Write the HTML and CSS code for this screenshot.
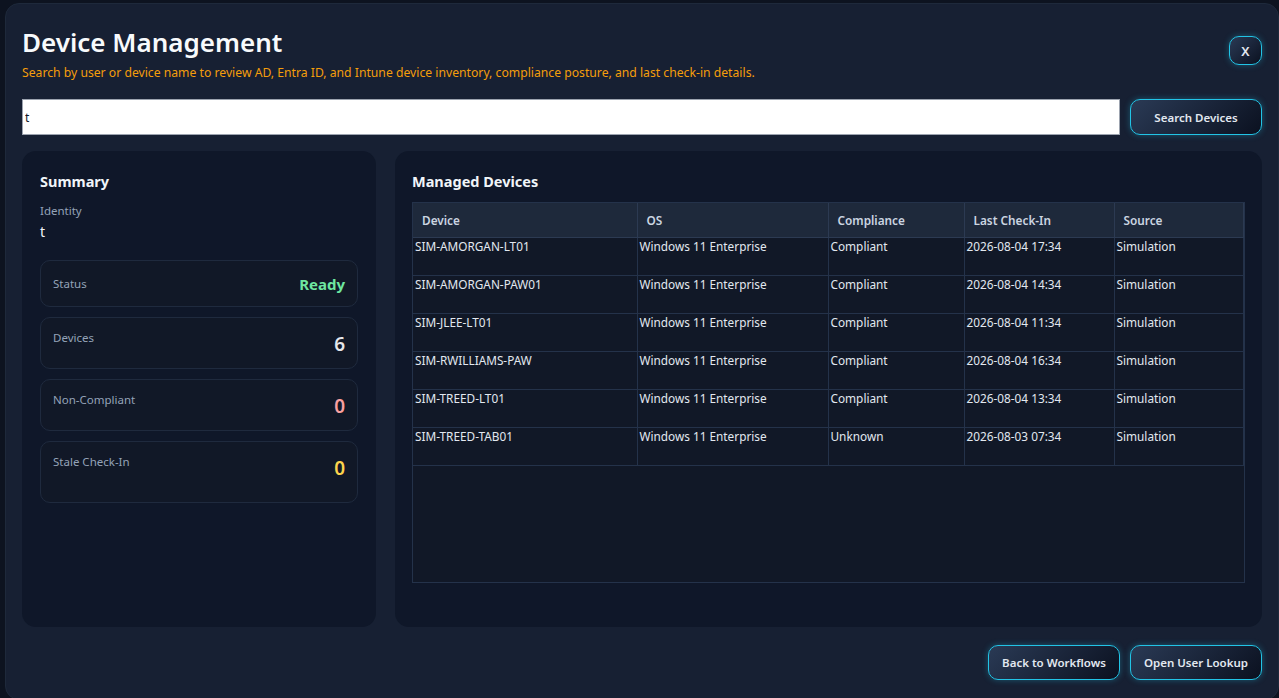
FILE: index.html
```html
<!DOCTYPE html>
<html>
<head>
<link rel="stylesheet" href="styles.css">
</head>
<body>
    <div class="window">
        <div class="header">
            <div class="header-text">
                <h1 class="title">Device Management</h1>
                <p class="subtitle">Search by user or device name to review AD, Entra ID, and Intune device inventory, compliance posture, and last check-in details.</p>
            </div>
            <button class="btn btn-close">X</button>
        </div>
        <div class="search-row">
            <input class="search-input" type="text" value="t">
            <button class="btn btn-search">Search Devices</button>
        </div>
        <div class="content">
            <div class="panel summary">
                <h2 class="panel-title">Summary</h2>
                <div class="identity-label">Identity</div>
                <div class="identity-value">t</div>
                <div class="stat stat-status">
                    <span class="stat-label">Status</span>
                    <span class="stat-value ready">Ready</span>
                </div>
                <div class="stat stat-top">
                    <span class="stat-label">Devices</span>
                    <span class="stat-value big">6</span>
                </div>
                <div class="stat stat-top">
                    <span class="stat-label">Non-Compliant</span>
                    <span class="stat-value big bad">0</span>
                </div>
                <div class="stat stat-top stat-tall">
                    <span class="stat-label">Stale Check-In</span>
                    <span class="stat-value big warn">0</span>
                </div>
            </div>
            <div class="panel devices">
                <h2 class="panel-title">Managed Devices</h2>
                <div class="table-wrap">
                    <table class="device-table">
                        <thead>
                            <tr>
                                <th class="c-device">Device</th>
                                <th class="c-os">OS</th>
                                <th class="c-comp">Compliance</th>
                                <th class="c-check">Last Check-In</th>
                                <th class="c-src">Source</th>
                            </tr>
                        </thead>
                        <tbody id="rows"></tbody>
                    </table>
                </div>
            </div>
        </div>
        <div class="footer">
            <button class="btn btn-footer">Back to Workflows</button>
            <button class="btn btn-footer">Open User Lookup</button>
        </div>
    </div>
    <script>
        const devices = [
            ['SIM-AMORGAN-LT01', 'Windows 11 Enterprise', 'Compliant', '2026-08-04 17:34', 'Simulation'],
            ['SIM-AMORGAN-PAW01', 'Windows 11 Enterprise', 'Compliant', '2026-08-04 14:34', 'Simulation'],
            ['SIM-JLEE-LT01', 'Windows 11 Enterprise', 'Compliant', '2026-08-04 11:34', 'Simulation'],
            ['SIM-RWILLIAMS-PAW', 'Windows 11 Enterprise', 'Compliant', '2026-08-04 16:34', 'Simulation'],
            ['SIM-TREED-LT01', 'Windows 11 Enterprise', 'Compliant', '2026-08-04 13:34', 'Simulation'],
            ['SIM-TREED-TAB01', 'Windows 11 Enterprise', 'Unknown', '2026-08-03 07:34', 'Simulation'],
        ];

        const tbody = document.getElementById('rows');
        for (const d of devices) {
            const tr = document.createElement('tr');
            for (const v of d) {
                const td = document.createElement('td');
                td.textContent = v;
                tr.appendChild(td);
            }
            tbody.appendChild(tr);
        }
    </script>
</body>
</html>
```

FILE: styles.css
```css
* {
    box-sizing: border-box;
}
body {
    margin: 0;
    padding: 3px 0 0 5px;
    height: 698px;
    overflow: hidden;
    background: #0d1320;
    font-family: "Noto Sans", "Open Sans", sans-serif;
    color: #e5e7eb;
}
.window {
    height: 697px;
    background: #172033;
    border: 1px solid #1e293b;
    border-radius: 14px;
    padding: 21px 16px 0 16px;
    display: flex;
    flex-direction: column;
}
.header {
    display: flex;
    justify-content: space-between;
    align-items: flex-start;
}
.title {
    margin: 0;
    font-size: 26px;
    font-weight: 600;
    color: #f8fafc;
    line-height: 34px;
}
.subtitle {
    margin: 5px 0 0;
    font-size: 12.2px;
    color: #f59e0b;
    line-height: 17px;
}
.btn {
    font-family: inherit;
    font-weight: 600;
    color: #e2e8f0;
    background: linear-gradient(135deg, #2a3a55 0%, #0b1120 100%);
    border: 1px solid #22c4e6;
    border-radius: 10px;
    box-shadow: 0 0 6px rgba(34, 196, 230, 0.35);
    cursor: pointer;
}
.btn-close {
    margin-top: 11px;
    width: 33px;
    height: 29px;
    font-size: 13px;
}
.search-row {
    display: flex;
    gap: 10px;
    margin-top: 18px;
}
.search-input {
    flex: 1;
    height: 36px;
    border: 1px solid #9ca3af;
    background: #ffffff;
    font-family: inherit;
    font-size: 12px;
    color: #111827;
    padding: 0 2px;
}
.btn-search {
    width: 132px;
    height: 36px;
    font-size: 11.5px;
}
.content {
    display: flex;
    gap: 19px;
    margin-top: 16px;
    height: 476px;
}
.panel {
    background: #0f1729;
    border-radius: 14px;
    padding: 20px 18px;
}
.summary {
    width: 354px;
}
.devices {
    flex: 1;
    padding: 20px 17px;
}
.panel-title {
    margin: 0;
    font-size: 14.5px;
    font-weight: 700;
    color: #f1f5f9;
    line-height: 20px;
}
.identity-label {
    margin-top: 12px;
    font-size: 11.5px;
    color: #94a3b8;
    line-height: 15px;
}
.identity-value {
    margin-top: 4px;
    font-size: 14px;
    color: #f1f5f9;
    line-height: 19px;
}
.stat {
    display: flex;
    justify-content: space-between;
    align-items: center;
    background: #111827;
    border: 1px solid #1f2a3e;
    border-radius: 10px;
    padding: 0 12px;
    margin-top: 10px;
    height: 52px;
}
.stat-status {
    margin-top: 19px;
    height: 47px;
}
.stat-top {
    align-items: flex-start;
    padding-top: 12px;
}
.stat-tall {
    height: 62px;
}
.stat-label {
    font-size: 11.5px;
    color: #94a3b8;
    line-height: 16px;
}
.stat-value {
    font-weight: 700;
    font-size: 15px;
}
.stat-value.big {
    font-size: 19px;
    line-height: 24px;
    margin-top: 2px;
    font-weight: 600;
}
.ready {
    color: #6ee7a0;
}
.bad {
    color: #f9a0a0;
}
.warn {
    color: #fcd34d;
}
.table-wrap {
    margin-top: 11px;
    height: 381px;
    border: 1px solid #24324a;
    background: #111827;
}
.device-table {
    border-collapse: collapse;
    width: 100%;
    font-size: 11.8px;
}
.device-table th {
    background: #1e293b;
    color: #cbd5e1;
    font-weight: 600;
    text-align: left;
    height: 34px;
    padding: 0 9px;
    border-right: 1px solid #2c3a52;
    border-bottom: 1px solid #2c3a52;
}
.device-table td {
    height: 38px;
    padding: 0 2px;
    vertical-align: top;
    color: #e2e8f0;
    border-right: 1px solid #24324a;
    border-bottom: 1px solid #24324a;
    line-height: 16px;
}
.c-device { width: 224px; }
.c-os { width: 191px; }
.c-comp { width: 136px; }
.c-check { width: 150px; }
.footer {
    display: flex;
    justify-content: flex-end;
    gap: 10px;
    margin-top: 18px;
}
.btn-footer {
    width: 132px;
    height: 35px;
    font-size: 11.5px;
}
```
